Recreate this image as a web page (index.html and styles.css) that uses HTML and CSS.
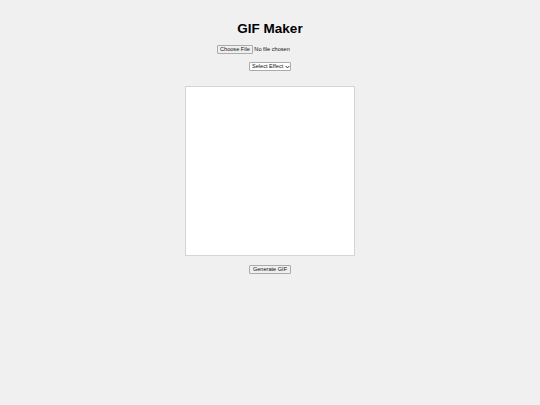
FILE: index.html
```html
<!DOCTYPE html>
<html lang="en">
<head>
<meta charset="utf-8">
<title>GIF Maker</title>
<link rel="stylesheet" href="styles.css">
</head>
<body>
<main class="app">
  <h1 class="title">GIF Maker</h1>
  <input class="file-input" type="file" accept="image/*">
  <span class="select-wrap">
    <select class="effect-select">
      <option>Select Effect</option>
      <option>Grayscale</option>
      <option>Sepia</option>
      <option>Invert</option>
    </select>
    <svg class="select-arrow" width="5" height="4" viewBox="0 0 5 4" aria-hidden="true">
      <path d="M0.6 0.9 L2.5 2.9 L4.4 0.9" fill="none" stroke="#222" stroke-width="0.9"/>
    </svg>
  </span>
  <canvas class="preview" width="168" height="168"></canvas>
  <button class="generate-btn" type="button">Generate GIF</button>
</main>
</body>
</html>
```

FILE: styles.css
```css
html {
  background: #f0f0f0;
}

body {
  margin: 0;
  background: #f0f0f0;
  font-family: "Liberation Sans", Arial, sans-serif;
}

.app {
  display: flex;
  flex-direction: column;
  align-items: center;
  padding-top: 21px;
}

.title {
  margin: 0;
  font-size: 13.5px;
  line-height: 16px;
  font-weight: bold;
  color: #000;
}

.file-input {
  margin-top: 8px;
  width: 106px;
  height: 9px;
  font-family: "Liberation Sans", Arial, sans-serif;
  font-size: 5.6px;
  line-height: 9px;
  color: #111;
}

.file-input::file-selector-button {
  height: 9px;
  margin: 0 1.5px 0 0;
  padding: 0 2px;
  font: inherit;
  line-height: 7px;
  color: #111;
  background: #efefef;
  border: 1px solid #ababab;
  border-radius: 1px;
}

.select-wrap {
  position: relative;
  margin-top: 8px;
  display: flex;
}

.effect-select {
  appearance: none;
  box-sizing: border-box;
  width: 42px;
  height: 9px;
  margin: 0;
  padding: 0 0 0 2px;
  font-family: "Liberation Sans", Arial, sans-serif;
  font-size: 5.6px;
  line-height: 7px;
  color: #111;
  background: #fff;
  border: 1px solid #ababab;
  border-radius: 1px;
  text-overflow: clip;
}

.select-arrow {
  position: absolute;
  right: 1.5px;
  top: 2.5px;
  pointer-events: none;
}

.preview {
  margin-top: 15px;
  width: 168px;
  height: 168px;
  background: #fff;
  border: 1px solid #d4d4d4;
}

.generate-btn {
  margin-top: 9px;
  width: 42px;
  height: 9px;
  padding: 0;
  font-family: "Liberation Sans", Arial, sans-serif;
  font-size: 5.6px;
  line-height: 7px;
  color: #111;
  background: #efefef;
  border: 1px solid #ababab;
  border-radius: 1px;
}
```
